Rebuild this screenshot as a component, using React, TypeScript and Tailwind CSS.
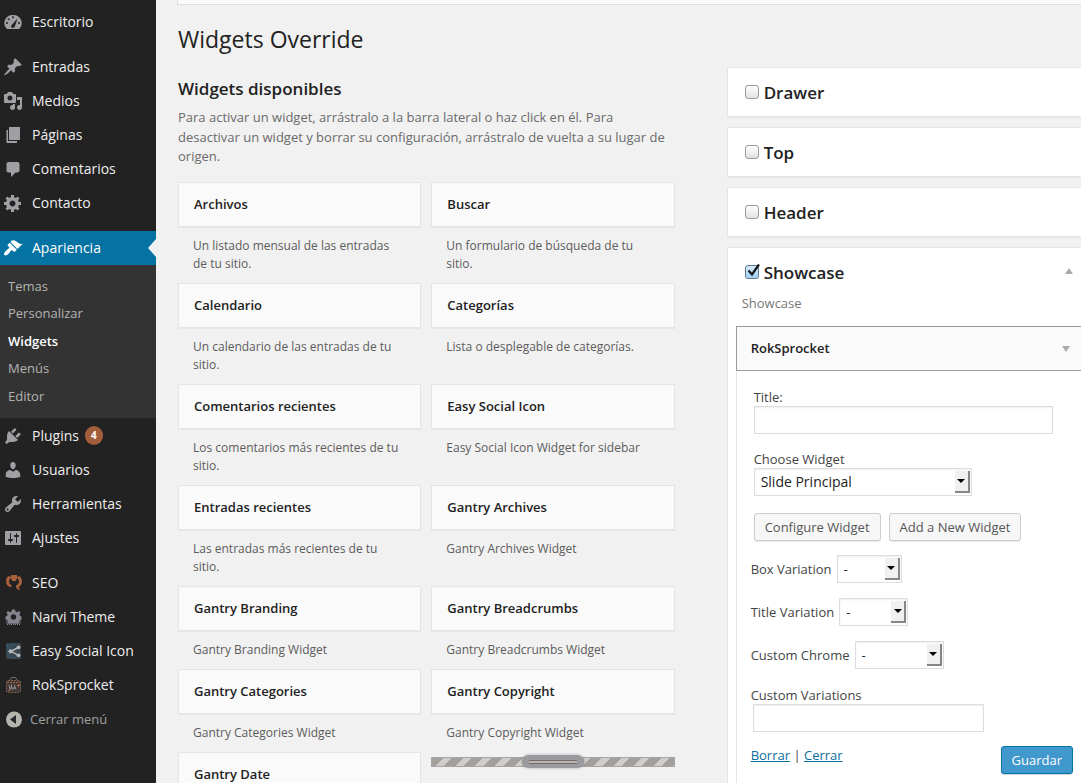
import React from "react"

const icons = {
  dashboard:
    "M3.8 17h12.4A8.2 8.2 0 0 0 10 3 8.2 8.2 0 0 0 3.8 17zM10 4.2a1 1 0 1 1 0 2 1 1 0 0 1 0-2zM5.6 6.3a1 1 0 1 1 0 2 1 1 0 0 1 0-2zM14.6 6.3l-2.7 8c-.3 1.2-1.1 1.7-2 1.7s-1.9-.8-1.8-1.9c.1-.8.6-1.3 1.3-1.9zM4 10a1 1 0 1 1 0 2 1 1 0 0 1 0-2zm12 0a1 1 0 1 1 0 2 1 1 0 0 1 0-2z",
  post: "M10.44 3.02l1.82-1.82 6.36 6.35-1.83 1.82c-1.05-.68-2.48-.57-3.41.36l-.75.75c-.92.93-1.04 2.35-.35 3.41l-1.83 1.82-2.41-2.41-2.8 2.79c-.42.42-3.38 2.71-3.8 2.29s1.86-3.39 2.28-3.81l2.79-2.79L4.1 9.36l1.83-1.82c1.05.69 2.48.57 3.4-.36l.75-.75c.93-.92 1.05-2.35.36-3.41z",
  media:
    "M13 11V4c0-.55-.45-1-1-1h-1.67L9 1H5L3.67 3H2c-.55 0-1 .45-1 1v7c0 .55.45 1 1 1h10c.55 0 1-.45 1-1zM7 4.5c1.38 0 2.5 1.12 2.5 2.5S8.38 9.5 7 9.5 4.5 8.38 4.5 7 5.62 4.5 7 4.5zM14 6h5v10.5c0 1.38-1.12 2.5-2.5 2.5S14 17.88 14 16.5s1.12-2.5 2.5-2.5c.17 0 .34.02.5.05V9h-3V6zm-4 8.05V13h2v3.5c0 1.38-1.12 2.5-2.5 2.5S7 17.88 7 16.5 8.12 14 9.5 14c.17 0 .34.02.5.05z",
  page: "M6 15V2h11v13H6zm-1 1h9v2H3.5V5H5v11z",
  comments: "M5.5 3h9c1.1 0 2 .9 2 2v6.5c0 1.1-.9 2-2 2h-2L8 18v-4.500H5.500c-1.1 0-2-.9-2-2V5c0-1.1.9-2 2-2z",
  generic:
    "M18 12h-2.180c-.17.7-.44 1.350-.81 1.930l1.540 1.540-2.100 2.100-1.540-1.540c-.58.36-1.230.63-1.910.79V19H8v-2.180c-.68-.16-1.330-.43-1.910-.79l-1.540 1.540-2.120-2.120 1.540-1.540c-.36-.58-.63-1.230-.79-1.910H1V9.030h2.170c.16-.7.44-1.350.8-1.940L2.430 5.550l2.100-2.100 1.540 1.540c.58-.37 1.240-.64 1.930-.81V2h3v2.180c.68.16 1.330.43 1.910.79l1.540-1.540 2.120 2.120-1.540 1.540c.36.59.64 1.240.8 1.940H18V12zm-8.500 1.500c1.660 0 3-1.340 3-3s-1.340-3-3-3-3 1.340-3 3 1.340 3 3 3z",
  appearance:
    "M14.48 11.06L7.41 3.99l1.5-1.5c.5-.56 2.3-.47 3.51.32 1.21.8 1.43 1.28 2.91 2.1 1.18.64 2.45 1.26 4.45.85zm-.71.71L6.7 4.7 4.93 6.47c-.39.39-.39 1.02 0 1.41l1.06 1.06c.39.39.39 1.03 0 1.42-.6.6-1.43 1.11-2.21 1.69-.35.26-.7.53-1.01.84C1.43 14.23.4 16.08 1.4 17.07c.99 1 2.84-.03 4.18-1.36.31-.31.58-.66.85-1.02.57-.78 1.08-1.61 1.69-2.21.39-.39 1.02-.39 1.41 0l1.06 1.06c.39.39 1.02.39 1.41 0z",
  plugins:
    "M13.11 4.36L9.87 7.6 8 5.73l3.24-3.24c.35-.34 1.05-.2 1.56.32.52.51.66 1.21.31 1.55zm-8 1.77l.91-1.12 9.01 9.01-1.19.84c-.71.71-2.63 1.16-3.82 1.16H6.14L4.9 17.26c-.59.59-1.54.59-2.12 0-.59-.58-.59-1.53 0-2.12l1.24-1.24v-3.88c0-1.13.4-3.19 1.09-3.89zm7.26 3.97l3.24-3.24c.34-.35 1.04-.21 1.55.31.52.51.66 1.21.31 1.55l-3.24 3.25z",
  users:
    "M10 9.25c-2.27 0-2.73-3.44-2.73-3.44C7 4.02 7.82 2 9.97 2c2.16 0 2.98 2.02 2.71 3.81 0 0-.41 3.44-2.68 3.44zm0 2.57L12.72 10c2.39 0 4.52 2.33 4.52 4.53v2.49s-3.65 1.13-7.24 1.13c-3.65 0-7.24-1.13-7.24-1.13v-2.49c0-2.25 1.94-4.48 4.47-4.48z",
  tools:
    "M16.68 9.77c-1.34 1.34-3.3 1.67-4.95.99l-5.41 6.52c-.99.99-2.59.99-3.58 0s-.99-2.59 0-3.57l6.52-5.42c-.68-1.65-.35-3.61.99-4.95 1.28-1.28 3.12-1.62 4.72-1.06l-2.89 2.89 2.82 2.82 2.86-2.87c.53 1.58.18 3.39-1.08 4.65zM3.81 16.21c.4.39 1.04.39 1.43 0 .4-.4.4-1.04 0-1.43-.39-.4-1.03-.4-1.43 0-.39.39-.39 1.03 0 1.43z",
  settings:
    "M18 16V4c0-.55-.45-1-1-1H3c-.55 0-1 .45-1 1v12c0 .55.45 1 1 1h14c.55 0 1-.45 1-1zM8 11h1c.55 0 1 .45 1 1s-.45 1-1 1H8v1.5c0 .28-.22.5-.5.5s-.5-.22-.5-.5V13H6c-.55 0-1-.45-1-1s.45-1 1-1h1V5.500c0-.28.22-.5.5-.5s.5.22.5.5V11zm5-2h-1c-.55 0-1-.45-1-1s.45-1 1-1h1V5.500c0-.28.22-.5.5-.5s.5.22.5.5V7h1c.55 0 1 .45 1 1s-.45 1-1 1h-1v5.500c0 .28-.22.5-.5.5s-.5-.22-.5-.5V9z",
}

function Glyph({ name }: { name: keyof typeof icons }) {
  return (
    <svg width="20" height="20" viewBox="0 0 20 20" fill="currentColor" fillRule="evenodd">
      <path d={icons[name]} />
    </svg>
  )
}

function SeoIcon() {
  return (
    <svg width="20" height="20" viewBox="0 0 20 20" fill="#a6603c">
      <path d="M5.500 3C3.800 4 3 6.200 3 8.500c0 2.700 1.500 4.700 4 5.500h1.500v-1.500C7 11.500 6 10 6 8.300L7 5.500h1.200L9 8h4l.8-2.500H15l1 2.800c0 2-1 3.500-3 4.200v2l2.500 2.500H17L15.800 14C17.800 13 19 11 19 8.500 19 6.200 18 4 16.300 3L14 4V2H8v2z" />
    </svg>
  )
}

function NarviIcon() {
  return (
    <svg width="20" height="20" viewBox="0 0 20 20">
      <path d="M3 13h15v4H3z" fill="#4b4b50" />
      <path
        fillRule="evenodd"
        fill="#85858f"
        d="M9 2.500h3l.5 2 1.600.7L16 4l1.500 1.500-1 2 .6 1.500 1.400.5v3l-2 .5L16 16.500H5L4.500 13l-2-.5v-3L4 9l.6-1.500-1.100-2L5 4l1.900 1.200 1.600-.7zm1.500 4.800a2.700 2.700 0 1 0 0 5.400 2.700 2.700 0 0 0 0-5.400z"
      />
      <path d="M4 17.500h13" stroke="#8d8d95" strokeDasharray="1 1" />
    </svg>
  )
}

function SocialIcon() {
  return (
    <svg width="20" height="20" viewBox="0 0 20 20">
      <rect x="3" y="2" width="15" height="16" rx="1" fill="#3a444d" />
      <path d="M4 4h7M4 6h5M4 8h3M5 10h2M4 13h3M9 3h4M5 15h4M8 17h5" stroke="#2b6a8c" strokeDasharray="1 1" />
      <path d="M15.500 6.500L8 10.300l7.500 4" stroke="#b4b7ba" strokeWidth="1.500" fill="none" />
      <circle cx="15.500" cy="6.300" r="1.900" fill="#b4b7ba" />
      <circle cx="7.600" cy="10.300" r="2.100" fill="#b4b7ba" />
      <circle cx="15.500" cy="14.300" r="1.900" fill="#b4b7ba" />
    </svg>
  )
}

function RokIcon() {
  return (
    <svg width="20" height="20" viewBox="0 0 20 20" fill="none">
      <path d="M7 5l1.500-2.500h4L14 5" stroke="#77706d" />
      <rect x="3.500" y="5.500" width="14" height="12" rx="1.500" fill="#3d3737" stroke="#85604f" strokeDasharray="2 1" />
      <path d="M4 7.500h13" stroke="#b0633f" strokeDasharray="2 1" />
      <path d="M6 10l1.500 5M8.500 9.500v3l2 2.500M11 9.500l2 5M6 13h7" stroke="#96908f" />
      <path d="M14 10.500h3M15.500 9v3M5 15.500h2" stroke="#b0633f" />
    </svg>
  )
}

function CollapseIcon() {
  return (
    <svg width="20" height="20" viewBox="0 0 20 20">
      <circle cx="11" cy="9.500" r="8" fill="#b5b3ae" />
      <path d="M13 5v9L7 9.500z" fill="#26282c" />
    </svg>
  )
}

type Entry = { label: string; icon: React.ReactNode; count?: number }

const topGroups: Entry[][] = [
  [{ label: "Escritorio", icon: <Glyph name="dashboard" /> }],
  [
    { label: "Entradas", icon: <Glyph name="post" /> },
    { label: "Medios", icon: <Glyph name="media" /> },
    { label: "Páginas", icon: <Glyph name="page" /> },
    { label: "Comentarios", icon: <Glyph name="comments" /> },
    { label: "Contacto", icon: <Glyph name="generic" /> },
  ],
]

const bottomGroups: Entry[][] = [
  [
    { label: "Plugins", icon: <Glyph name="plugins" />, count: 4 },
    { label: "Usuarios", icon: <Glyph name="users" /> },
    { label: "Herramientas", icon: <Glyph name="tools" /> },
    { label: "Ajustes", icon: <Glyph name="settings" /> },
  ],
  [
    { label: "SEO", icon: <SeoIcon /> },
    { label: "Narvi Theme", icon: <NarviIcon /> },
    { label: "Easy Social Icon", icon: <SocialIcon /> },
    { label: "RokSprocket", icon: <RokIcon /> },
  ],
]

const submenu = ["Temas", "Personalizar", "Widgets", "Menús", "Editor"]

const widgets = [
  ["Archivos", "Un listado mensual de las entradas de tu sitio."],
  ["Buscar", "Un formulario de búsqueda de tu sitio."],
  ["Calendario", "Un calendario de las entradas de tu sitio."],
  ["Categorías", "Lista o desplegable de categorías."],
  ["Comentarios recientes", "Los comentarios más recientes de tu sitio."],
  ["Easy Social Icon", "Easy Social Icon Widget for sidebar"],
  ["Entradas recientes", "Las entradas más recientes de tu sitio."],
  ["Gantry Archives", "Gantry Archives Widget"],
  ["Gantry Branding", "Gantry Branding Widget"],
  ["Gantry Breadcrumbs", "Gantry Breadcrumbs Widget"],
  ["Gantry Categories", "Gantry Categories Widget"],
  ["Gantry Copyright", "Gantry Copyright Widget"],
  ["Gantry Date"],
]

function MenuGroup({ items }: { items: Entry[] }) {
  return (
    <ul>
      {items.map((item) => (
        <li key={item.label}>
          <a href="#" className="flex min-h-[34px] items-center text-sm text-[#eee]">
            <span className="w-8 shrink-0 pl-[3px] text-[#9fa0a3]">{item.icon}</span>
            {item.label}
            {item.count && (
              <span className="my-2 ml-1.5 flex h-[19px] w-[18px] items-center justify-center rounded-full bg-[#a25e3a] text-[10px] font-bold text-white">
                {item.count}
              </span>
            )}
          </a>
        </li>
      ))}
    </ul>
  )
}

function Sidebar() {
  return (
    <nav className="w-[156px] shrink-0 bg-[#222] pt-[5px]">
      <div className="flex flex-col gap-[11px]">
        {topGroups.map((group, i) => (
          <MenuGroup key={i} items={group} />
        ))}
        <div>
          <a href="#" className="relative flex h-[34px] items-center bg-[#0472a3] text-sm text-white">
            <span className="w-8 shrink-0 pl-[3px]">
              <Glyph name="appearance" />
            </span>
            Apariencia
            {/* Notch pointing at the content */}
            <span className="absolute right-0 top-2 border-y-[9px] border-r-8 border-y-transparent border-r-[#f1f1f1]" />
          </a>
          <ul className="grid h-[153px] auto-rows-fr bg-[#333] py-2 text-[13px]">
            {submenu.map((label) => (
              <li key={label} className="flex items-center px-2">
                <a href="#" className={label === "Widgets" ? "font-semibold text-white" : "text-[#b4b4b4]"}>
                  {label}
                </a>
              </li>
            ))}
          </ul>
          <MenuGroup items={bottomGroups[0]} />
        </div>
        <div>
          <MenuGroup items={bottomGroups[1]} />
          <button type="button" className="flex h-9 items-center text-[13px] text-[#a0a0a0]">
            <span className="w-[30px] shrink-0 pl-[3px]">
              <CollapseIcon />
            </span>
            Cerrar menú
          </button>
        </div>
      </div>
    </nav>
  )
}

function AreaTitle({ title, checked }: { title: string; checked?: boolean }) {
  return (
    <label className="flex h-12 items-center gap-[5px] pl-[17px] text-[17px] font-semibold text-[#222]">
      <span className="relative size-[14px]">
        <input
          type="checkbox"
          defaultChecked={checked}
          className="peer block size-[14px] appearance-none rounded-[3px] border border-[#9a9a9a] bg-linear-to-b from-white to-[#e2e2e2] checked:border-[#5c7a94] checked:from-[#d5e9f7] checked:to-[#a3cfee]"
        />
        <svg
          className="pointer-events-none absolute -top-0.5 left-0 hidden peer-checked:block"
          width="16"
          height="16"
          viewBox="0 0 16 16"
          fill="none"
          stroke="#15171c"
          strokeWidth="2.2"
        >
          <path d="M3.500 7.500L7 11.500 14 1.500" />
        </svg>
      </span>
      <span className="pt-0.5">{title}</span>
    </label>
  )
}

function Select({ id, options, className }: { id: string; options: string[]; className: string }) {
  return (
    <span className={`relative inline-block ${className}`}>
      <select
        id={id}
        className="block h-7 w-full appearance-none border border-[#ddd] bg-white pl-1.5 text-[#222] shadow-[inset_0_1px_2px_rgba(0,0,0,0.07)]"
      >
        {options.map((option) => (
          <option key={option}>{option}</option>
        ))}
      </select>
      <span className="pointer-events-none absolute right-[2px] top-[3px] flex h-[22px] w-[15px] items-center justify-center border-b-2 border-r-2 border-[#85858c] bg-[#f0f0f0]">
        <span className="border-x-[4px] border-t-4 border-x-transparent border-t-black" />
      </span>
    </span>
  )
}

const variations = [
  { id: "box-variation", label: "Box Variation", width: "w-[65px]" },
  { id: "title-variation", label: "Title Variation", width: "w-[69px]" },
  { id: "custom-chrome", label: "Custom Chrome", width: "w-[89px]" },
]

function WidgetForm() {
  return (
    <form className="border-l border-[#e5e5e5] pb-10 pl-[14px] pr-2 pt-[17px] text-[13px] leading-[18px] text-[#444]">
      <div className="pl-[3px]">
        <label htmlFor="title" className="block">
          Title:
        </label>
        <input
          id="title"
          type="text"
          className="block h-7 w-full max-w-[299px] border border-[#ddd] bg-white px-1.5 shadow-[inset_0_1px_2px_rgba(0,0,0,0.07)]"
        />
        <label htmlFor="choose" className="mt-4 block">
          Choose Widget
        </label>
        <Select id="choose" options={["Slide Principal"]} className="block w-[218px] text-sm" />
        <div className="mt-[17px] flex gap-2">
          {["Configure Widget", "Add a New Widget"].map((text) => (
            <button
              key={text}
              type="button"
              className="h-7 rounded-[3px] border border-[#ccc] bg-[#f7f7f7] px-[10px] text-[#555] shadow-[0_1px_0_rgba(0,0,0,0.08)]"
            >
              {text}
            </button>
          ))}
        </div>
      </div>
      <div className="mt-[14px] flex flex-col gap-[15px]">
        {variations.map((v) => (
          <div key={v.id} className="flex items-center gap-[5px]">
            <label htmlFor={v.id}>{v.label}</label>
            <Select id={v.id} options={["-"]} className={v.width} />
          </div>
        ))}
      </div>
      <label htmlFor="custom-variations" className="mt-[17px] block">
        Custom Variations
      </label>
      <input
        id="custom-variations"
        type="text"
        className="ml-0.5 block h-7 w-[231px] border border-[#ddd] bg-white px-1.5 shadow-[inset_0_1px_2px_rgba(0,0,0,0.07)]"
      />
      <div className="mt-[14px] flex items-start justify-between">
        <p>
          <a href="#" className="text-[#0b6f9f] underline">
            Borrar
          </a>{" "}
          |{" "}
          <a href="#" className="text-[#0b6f9f] underline">
            Cerrar
          </a>
        </p>
        <button
          type="submit"
          className="h-7 rounded-[3px] border border-[#0074a2] bg-[#4198cc] px-[10px] text-white shadow-[0_1px_0_rgba(0,0,0,0.15)]"
        >
          Guardar
        </button>
      </div>
    </form>
  )
}

export default function App() {
  return (
    <div className="flex h-screen overflow-hidden bg-[#f1f1f1] font-['Open_Sans',sans-serif]">
      <Sidebar />
      <main className="min-w-0 flex-1 pl-[21px]">
        {/* Bottom edge of the notice above the title */}
        <div className="h-[5px] border-b border-l border-[#ddd] bg-[#fafafa]" />
        <div className="flex pl-px">
          <section className="w-[55%] shrink-0">
            <h1 className="pt-[18px] text-[23px] leading-8 text-[#222]">Widgets Override</h1>
            <h2 className="mt-[22px] text-[17px] font-semibold leading-6 text-[#222]">Widgets disponibles</h2>
            <p className="mt-[7px] text-[13px] leading-normal text-[#6b6b6b]">
              Para activar un widget, arrástralo a la barra lateral o haz click en él. Para desactivar un widget y
              borrar su configuración, arrástralo de vuelta a su lugar de origen.
            </p>
            <div className="mt-[15px] grid grid-cols-2 gap-x-[10px]">
              {widgets.map(([name, text]) => (
                <div key={name}>
                  <h3 className="flex h-[45px] items-center border border-[#e5e5e5] bg-[#fafafa] px-[15px] text-[13px] font-semibold leading-4 text-[#222] shadow-[0_1px_1px_rgba(0,0,0,0.04)]">
                    {name}
                  </h3>
                  {text && <p className="py-[10px] pl-[15px] pr-5 text-xs leading-[18px] text-[#5c5c5c]">{text}</p>}
                </div>
              ))}
              {/* Striped drag strip */}
              <div className="mt-[5px] flex h-[10px] items-center justify-center border border-[#a5a5a5] bg-[repeating-linear-gradient(135deg,#a39f9b_0_8px,#d0cdca_8px_14px)]">
                <div className="flex h-[13px] w-[62px] shrink-0 items-center justify-center rounded-full bg-[#9b9b9f] shadow-[0_0_3px_rgba(0,0,0,0.3)]">
                  <div className="h-1 w-12 border-y border-[#6d6d7a] bg-[#bfb5aa]" />
                </div>
              </div>
            </div>
          </section>

          <section className="ml-[52px] flex min-w-0 flex-1 flex-col gap-[10px] pt-[62px]">
            {["Drawer", "Top", "Header"].map((area) => (
              <div
                key={area}
                className="border border-r-0 border-[#e5e5e5] bg-white shadow-[0_1px_1px_rgba(0,0,0,0.04)]"
              >
                <AreaTitle title={area} />
              </div>
            ))}
            <div className="border border-r-0 border-[#e5e5e5] bg-white pl-2">
              <div className="-ml-2 flex items-start justify-between pr-2">
                <AreaTitle title="Showcase" checked />
                <span className="mt-5 border-x-4 border-b-[6px] border-x-transparent border-b-[#aaa]" />
              </div>
              <p className="pl-1.5 text-[13px] leading-[14px] text-[#777]">Showcase</p>
              <div className="mt-4 flex h-[45px] items-center justify-between border border-r-0 border-[#999] bg-[#fafafa] pl-[14px] pr-[11px]">
                <h4 className="text-[13px] font-semibold text-[#222]">RokSprocket</h4>
                <span className="border-x-4 border-t-[6px] border-x-transparent border-t-[#aaa]" />
              </div>
              <WidgetForm />
            </div>
          </section>
        </div>
      </main>
    </div>
  )
}
